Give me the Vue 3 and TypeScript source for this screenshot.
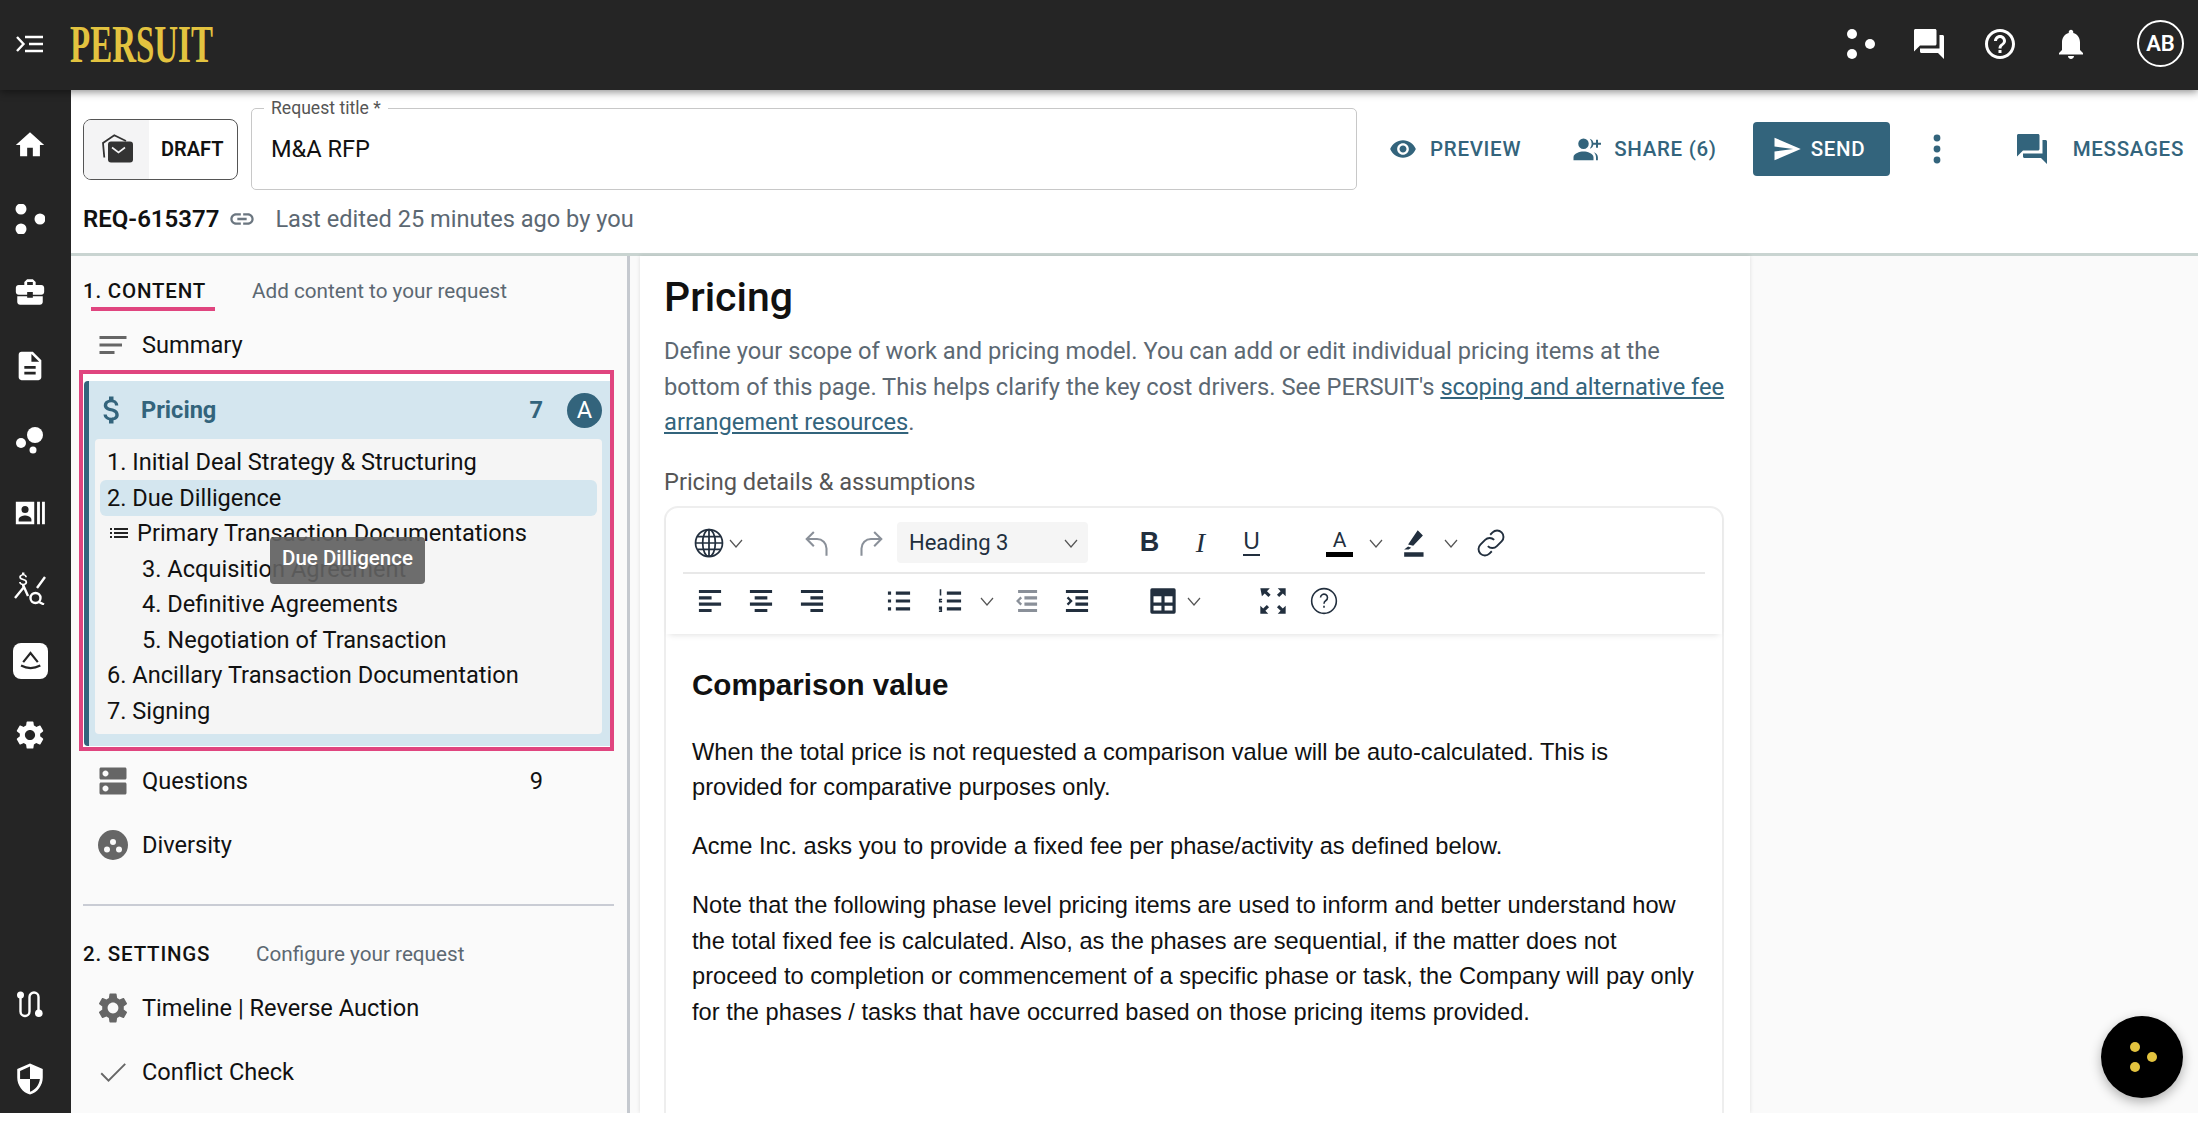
<script setup lang="ts">
const icons: Record<string, string> = {
  home: 'M10 20v-6h4v6h5v-8h3L12 3 2 12h3v8z',
  briefcase: 'M10 16v-1H3.01L3 19c0 1.11.89 2 2 2h14c1.11 0 2-.89 2-2v-4h-7v1h-4zm10-9h-4.01V5l-2-2h-4l-2 2v2H4c-1.1 0-2 .9-2 2v3c0 1.11.89 2 2 2h6v-2h4v2h6c1.1 0 2-.9 2-2V9c0-1.1-.9-2-2-2zm-6 0h-4V5h4v2z',
  doc: 'M14 2H6c-1.1 0-1.99.9-1.99 2L4 20c0 1.1.89 2 1.99 2H18c1.1 0 2-.9 2-2V8l-6-6zm2 16H8v-2h8v2zm0-4H8v-2h8v2zm-3-5V3.5L18.5 9H13z',
  gear: 'M19.14 12.94c.04-.3.06-.61.06-.94 0-.32-.02-.64-.07-.94l2.03-1.58c.18-.14.23-.41.12-.61l-1.92-3.32c-.12-.22-.37-.29-.59-.22l-2.39.96c-.5-.38-1.03-.7-1.62-.94l-.36-2.54c-.04-.24-.24-.41-.48-.41h-3.84c-.24 0-.43.17-.47.41l-.36 2.54c-.59.24-1.13.57-1.62.94l-2.39-.96c-.22-.08-.47 0-.59.22L2.74 8.87c-.12.21-.08.47.12.61l2.03 1.58c-.05.3-.09.63-.09.94s.02.64.07.94l-2.03 1.58c-.18.14-.23.41-.12.61l1.92 3.32c.12.22.37.29.59.22l2.39-.96c.5.38 1.03.7 1.62.94l.36 2.54c.05.24.24.41.48.41h3.84c.24 0 .44-.17.47-.41l.36-2.54c.59-.24 1.13-.56 1.62-.94l2.39.96c.22.08.47 0 .59-.22l1.92-3.32c.12-.22.07-.47-.12-.61l-2.01-1.58zM12 15.6c-1.98 0-3.6-1.62-3.6-3.6s1.62-3.6 3.6-3.6 3.6 1.62 3.6 3.6-1.62 3.6-3.6 3.6z',
  shield: 'M12 1L3 5v6c0 5.55 3.84 10.74 9 12 5.16-1.26 9-6.45 9-12V5l-9-4zm0 10.99h7c-.53 4.12-3.28 7.79-7 8.94V12H5V6.3l7-3.11v8.8z',
  forum: 'M21 6h-2v9H6v2c0 .55.45 1 1 1h11l4 4V7c0-.55-.45-1-1-1zm-4 6V3c0-.55-.45-1-1-1H3c-.55 0-1 .45-1 1v14l4-4h10c.55 0 1-.45 1-1z',
  help: 'M11 18h2v-2h-2v2zm1-16C6.48 2 2 6.48 2 12s4.48 10 10 10 10-4.48 10-10S17.52 2 12 2zm0 18c-4.41 0-8-3.59-8-8s3.59-8 8-8 8 3.59 8 8-3.59 8-8 8zm0-14c-2.21 0-4 1.79-4 4h2c0-1.1.9-2 2-2s2 .9 2 2c0 2-3 1.75-3 5h2c0-2.25 3-2.5 3-5 0-2.21-1.79-4-4-4z',
  bell: 'M12 22c1.1 0 2-.9 2-2h-4c0 1.1.89 2 2 2zm6-6v-5c0-3.07-1.64-5.64-4.5-6.32V4c0-.83-.67-1.5-1.5-1.5s-1.5.67-1.5 1.5v.68C7.63 5.36 6 7.92 6 11v5l-2 2v1h16v-1l-2-2z',
  eye: 'M12 4.5C7 4.5 2.73 7.61 1 12c1.73 4.39 6 7.5 11 7.5s9.27-3.11 11-7.5c-1.73-4.39-6-7.5-11-7.5zM12 17c-2.76 0-5-2.24-5-5s2.24-5 5-5 5 2.24 5 5-2.24 5-5 5zm0-8c-1.66 0-3 1.34-3 3s1.34 3 3 3 3-1.34 3-3-1.34-3-3-3z',
  share: 'M10 12a4.2 4.2 0 1 0 0-8.4 4.2 4.2 0 0 0 0 8.4zm0 2c-3 0-8 1.5-8 4.5V21h16v-2.5c0-3-5-4.5-8-4.5zM15 3.8a4.2 4.2 0 0 1 0 8 6 6 0 0 0 0-8zM18 14.3c2 .8 3.5 2.200 3.500 4.200V21H20v-2.500c0-1.700-.8-3.200-2-4.200zM20 7V4.500h1.600V7H24v1.600h-2.400V11H20V8.600h-2.400V7z',
  send: 'M2.01 21L23 12 2.01 3 2 10l15 2-15 2z',
  dollar: 'M11.8 10.9c-2.27-.59-3-1.2-3-2.15 0-1.09 1.01-1.85 2.7-1.85 1.78 0 2.44.85 2.5 2.1h2.21c-.07-1.72-1.12-3.3-3.21-3.81V3h-3v2.16c-1.94.42-3.5 1.68-3.5 3.61 0 2.31 1.91 3.46 4.7 4.13 2.5.6 3 1.48 3 2.41 0 .69-.49 1.79-2.7 1.79-2.06 0-2.87-.92-2.98-2.1h-2.2c.12 2.19 1.76 3.42 3.68 3.83V21h3v-2.15c1.95-.37 3.5-1.5 3.5-3.55 0-2.84-2.43-3.81-4.7-4.4z',
  dns: 'M20 13H4c-.55 0-1 .45-1 1v6c0 .55.45 1 1 1h16c.55 0 1-.45 1-1v-6c0-.55-.45-1-1-1zM7 19c-1.1 0-2-.9-2-2s.9-2 2-2 2 .9 2 2-.9 2-2 2zM20 3H4c-.55 0-1 .45-1 1v6c0 .55.45 1 1 1h16c.55 0 1-.45 1-1V4c0-.55-.45-1-1-1zM7 9c-1.1 0-2-.9-2-2s.9-2 2-2 2 .9 2 2-.9 2-2 2z',
  diversity: 'M12 2a10 10 0 1 0 0 20 10 10 0 0 0 0-20zM8 17a2 2 0 1 1 0-4 2 2 0 0 1 0 4zm2-7a2 2 0 1 1 4 0 2 2 0 0 1-4 0zm6 7a2 2 0 1 1 0-4 2 2 0 0 1 0 4z',
  check: 'M9 16.8L4.6 12.4l-.9.9L9 18.600 20.600 7l-.9-.9z',
  notes: 'M3 18h10v-2H3v2zM3 6v2h18V6H3zm0 7h15v-2H3v2z',
  list: 'M3 13h2v-2H3v2zm0 4h2v-2H3v2zm0-8h2V7H3v2zm4 4h14v-2H7v2zm0 4h14v-2H7v2zM7 7v2h14V7H7z',
  link: 'M3.9 12c0-1.71 1.39-3.1 3.1-3.1h4V7H7c-2.76 0-5 2.24-5 5s2.24 5 5 5h4v-1.9H7c-1.71 0-3.1-1.39-3.1-3.1zM8 13h8v-2H8v2zm9-6h-4v1.9h4c1.71 0 3.1 1.39 3.1 3.1s-1.39 3.1-3.1 3.1h-4V17h4c2.76 0 5-2.24 5-5s-2.24-5-5-5z',
  contact: 'M2 4h13v16H2zM8.500 7a2.500 2.500 0 1 0 0 5 2.500 2.500 0 0 0 0-5zM4 18h9v-1.500c0-1.800-3-2.800-4.500-2.800S4 14.700 4 16.500zM17 4h2v16h-2zM20.500 4h2v16h-2z',
  alignLeft: 'M5 5h14v2H5zM5 9h8v2H5zM5 13h14v2H5zM5 17h8v2H5z',
  alignCenter: 'M5 5h14v2H5zM8 9h8v2H8zM5 13h14v2H5zM8 17h8v2H8z',
  alignRight: 'M5 5h14v2H5zM11 9h8v2h-8zM5 13h14v2H5zM11 17h8v2h-8z',
  bullets: 'M10 6h9v2h-9zM10 11h9v2h-9zM10 16h9v2h-9zM5 6h2v2H5zM5 11h2v2H5zM5 16h2v2H5z',
  numbers: 'M10 6h9v2h-9zM10 11h9v2h-9zM10 16h9v2h-9zM5.500 4.500h1v4h-1zM5 10.500h2v1H6v.5h1v1H5zM5 15.500h2v3.500H5v-1h1v-.4H5v-1h1v-.1H5z',
  outdent: 'M7 5h12v2H7zM11 9h8v2h-8zM11 13h8v2h-8zM7 17h12v2H7zM8.500 9.200l1 1L7.700 12l1.800 1.800-1 1L5.700 12z',
  indent: 'M5 5h14v2H5zM11 9h8v2h-8zM11 13h8v2h-8zM5 17h14v2H5zM6.500 9.200l-1 1L7.300 12l-1.800 1.800 1 1L9.300 12z',
  table: 'M5 4h14a1 1 0 0 1 1 1v14a1 1 0 0 1-1 1H5a1 1 0 0 1-1-1V5a1 1 0 0 1 1-1zm1 5v4h5V9zm7 0v4h5V9zm-7 6v3h5v-3zm7 0v3h5v-3z',
  fullscreen: 'M4 4h6L8.200 5.800l2.300 2.300-1.400 1.400-2.300-2.300L5 9zM20 4v5l-1.800-1.800-2.300 2.300-1.400-1.400 2.300-2.300L15 4zM4 20v-5l1.800 1.800 2.300-2.300 1.400 1.400-2.300 2.300L9 20zM20 20h-5l1.800-1.800-2.300-2.300 1.400-1.400 2.300 2.300L20 15z',
}

type NavRow = { label: string; icon: string; count?: number }

const railTop = ['home', 'dots', 'briefcase', 'doc', 'bubbles', 'contact', 'search', 'tile', 'gear']

const contentRows: NavRow[] = [
  { label: 'Questions', icon: 'dns', count: 9 },
  { label: 'Diversity', icon: 'diversity' },
]
const settingsRows: NavRow[] = [
  { label: 'Timeline | Reverse Auction', icon: 'gear' },
  { label: 'Conflict Check', icon: 'check' },
]

type PricingItem = { label: string; nested?: boolean; active?: boolean; group?: boolean }
const pricingItems: PricingItem[] = [
  { label: '1. Initial Deal Strategy & Structuring' },
  { label: '2. Due Dilligence', active: true },
  { label: 'Primary Transaction Documentations', group: true },
  { label: '3. Acquisition Agreement', nested: true },
  { label: '4. Definitive Agreements', nested: true },
  { label: '5. Negotiation of Transaction', nested: true },
  { label: '6. Ancillary Transaction Documentation' },
  { label: '7. Signing' },
]
</script>

<template>
  <div class="page">
    <header class="topbar">
      <svg class="menu-icon" viewBox="0 0 28 20" fill="none" stroke="#fff" stroke-width="2.400">
        <path d="M9 3h18M13 10h14M9 17h18M1 3l6.500 7L1 17" />
      </svg>
      <span class="logo">PERSUIT</span>
      <div class="top-actions">
        <svg class="ti-dots" viewBox="0 0 30 30" fill="#fff">
          <circle cx="6" cy="5" r="5" /><circle cx="6" cy="25" r="5" /><circle cx="24" cy="15" r="5" />
        </svg>
        <svg class="ti" viewBox="0 0 24 24" fill="#fff"><path :d="icons.forum" /></svg>
        <svg class="ti" viewBox="0 0 24 24" fill="#fff"><path :d="icons.help" /></svg>
        <svg class="ti" viewBox="0 0 24 24" fill="#fff"><path :d="icons.bell" /></svg>
        <div class="avatar">AB</div>
      </div>
    </header>

    <div class="shell">
      <nav class="rail">
        <div class="rail-group">
          <div v-for="name in railTop" :key="name" class="rail-slot">
            <svg v-if="icons[name]" class="rail-icon" viewBox="0 0 24 24" fill="#fff"><path :d="icons[name]" /></svg>
            <svg v-else-if="name === 'dots'" class="rail-small" viewBox="0 0 30 30" fill="#fff">
              <circle cx="6" cy="5" r="5.500" /><circle cx="6" cy="25" r="5.500" /><circle cx="25" cy="15" r="5.500" />
            </svg>
            <svg v-else-if="name === 'bubbles'" class="rail-small" viewBox="0 0 30 30" fill="#fff">
              <circle cx="20" cy="10" r="8" /><circle cx="6" cy="18" r="5" /><circle cx="18" cy="25" r="3.500" />
            </svg>
            <svg v-else-if="name === 'search'" class="rail-search" viewBox="0 0 34 36" fill="none" stroke="#fff" stroke-width="2.400">
              <path :d="icons.dollar" fill="#fff" stroke="none" transform="translate(1 1) scale(.8)" />
              <path d="M32 8l-8 11M2 29l9-11 4 9" />
              <circle cx="22.500" cy="29" r="5" /><path d="M26 33l5 2.500" />
            </svg>
            <div v-else-if="name === 'tile'" class="tile">
              <svg viewBox="0 0 24 24" fill="none" stroke="#252525" stroke-width="1.900">
                <path d="M5.500 13.500L12 5.300l6.500 8.200M3.600 16.500Q12 21 20.700 16.500" />
              </svg>
            </div>
          </div>
        </div>
        <div class="rail-group rail-bottom">
          <div class="rail-slot">
            <svg class="rail-small" viewBox="0 0 30 30" fill="none" stroke="#fff" stroke-width="2.400">
              <path d="M5.500 5V21.500a4.500 4.500 0 0 0 9 0V7a4.500 4.500 0 0 1 9 0V23" />
              <circle cx="5.500" cy="5" r="3.500" fill="#fff" stroke="none" /><circle cx="23.800" cy="23.300" r="3.800" fill="#fff" stroke="none" />
            </svg>
          </div>
          <div class="rail-slot">
            <svg class="rail-icon" viewBox="0 0 24 24" fill="#fff"><path :d="icons.shield" /></svg>
          </div>
        </div>
      </nav>

      <main class="main">
        <section class="request-head">
          <div class="head-row">
            <div class="draft">
              <div class="draft-icon">
                <svg viewBox="0 0 32 32">
                  <path d="M3.300 24.500L2 10l11.300-7.800L25 8" fill="none" stroke="#333" stroke-width="1.800" />
                  <rect x="7" y="8.500" width="25" height="21" rx="3" fill="#333" />
                  <path d="M11 14.500l6.500 5 6.500-5" fill="none" stroke="#f4f4f5" stroke-width="1.600" />
                </svg>
              </div>
              <span class="draft-label">DRAFT</span>
            </div>
            <div class="title-field">
              <span class="title-label">Request title *</span>
              <span class="title-value">M&amp;A RFP</span>
            </div>
            <div class="action action-preview">
              <svg viewBox="0 0 24 24"><path :d="icons.eye" /></svg>
              <span>PREVIEW</span>
            </div>
            <div class="action action-share">
              <svg viewBox="0 0 24 24"><path :d="icons.share" /></svg>
              <span>SHARE (6)</span>
            </div>
            <button class="send">
              <svg viewBox="0 0 24 24"><path :d="icons.send" /></svg>
              <span>SEND</span>
            </button>
            <svg class="more" viewBox="0 0 8 32"><circle cx="4" cy="5" r="3.400" /><circle cx="4" cy="16" r="3.400" /><circle cx="4" cy="27" r="3.400" /></svg>
            <div class="action action-messages">
              <svg viewBox="0 0 24 24"><path :d="icons.forum" /></svg>
              <span>MESSAGES</span>
            </div>
          </div>
          <div class="meta-row">
            <span class="req-id">REQ-615377</span>
            <svg class="req-link" viewBox="0 0 24 24"><path :d="icons.link" /></svg>
            <span class="edited">Last edited 25 minutes ago by you</span>
          </div>
        </section>

        <div class="workspace">
          <aside class="steps">
            <div class="step-head step-content">
              <span class="step-title">1. CONTENT</span>
              <span class="step-sub">Add content to your request</span>
            </div>
            <div class="row row-summary">
              <span class="row-icon"><svg viewBox="0 0 24 24"><path :d="icons.notes" /></svg></span>
              <span>Summary</span>
            </div>

            <div class="highlight">
              <div class="pricing">
                <div class="pricing-head">
                  <span class="row-icon"><svg viewBox="0 0 24 24"><path :d="icons.dollar" /></svg></span>
                  <span class="pricing-name">Pricing</span>
                  <span class="pricing-count">7</span>
                  <span class="pricing-badge">A</span>
                </div>
                <ul class="pricing-items">
                  <li
                    v-for="item in pricingItems"
                    :key="item.label"
                    :class="{ nested: item.nested, active: item.active, group: item.group }"
                  >
                    <svg v-if="item.group" viewBox="0 0 24 24"><path :d="icons.list" /></svg>
                    {{ item.label }}
                  </li>
                  <div class="tooltip">Due Dilligence</div>
                </ul>
              </div>
            </div>

            <div class="content-rows">
              <div v-for="row in contentRows" :key="row.label" class="row">
                <span class="row-icon"><svg viewBox="0 0 24 24"><path :d="icons[row.icon]" /></svg></span>
                <span>{{ row.label }}</span>
                <span v-if="row.count" class="row-count">{{ row.count }}</span>
              </div>
            </div>

            <div class="divider"></div>

            <div class="step-head step-settings">
              <span class="step-title">2. SETTINGS</span>
              <span class="step-sub">Configure your request</span>
            </div>
            <div v-for="row in settingsRows" :key="row.label" class="row">
              <span class="row-icon"><svg viewBox="0 0 24 24"><path :d="icons[row.icon]" /></svg></span>
              <span>{{ row.label }}</span>
            </div>
          </aside>

          <article class="card">
            <h1 class="card-title">Pricing</h1>
            <p class="card-desc">
              Define your scope of work and pricing model. You can add or edit individual pricing items at the
              bottom of this page. This helps clarify the key cost drivers. See PERSUIT's
              <a class="card-link">scoping and alternative fee arrangement resources</a>.
            </p>
            <div class="field-label">Pricing details &amp; assumptions</div>

            <div class="editor">
              <div class="toolbar">
                <div class="tb-row tb-first">
                  <span class="tb-btn">
                    <svg viewBox="0 0 24 24" fill="none" stroke="#222f3e" stroke-width="1.100">
                      <circle cx="12" cy="12" r="8.500" /><ellipse cx="12" cy="12" rx="4" ry="8.500" />
                      <path d="M12 3.500v17M3.500 12h17M4.700 8h14.600M4.700 16h14.600" />
                    </svg>
                  </span>
                  <svg class="tb-chev tb-chev-globe" viewBox="0 0 14 14"><path d="M1 4l6 7 6-7" /></svg>
                  <span class="tb-btn tb-undo">
                    <svg viewBox="0 0 24 24" fill="none" stroke="#8a9099" stroke-width="1.300"><path d="M10 5L5.500 9.500 10 14M6 9.500h6a6 6 0 0 1 6 6V20" /></svg>
                  </span>
                  <span class="tb-btn tb-redo">
                    <svg viewBox="0 0 24 24" fill="none" stroke="#8a9099" stroke-width="1.300"><path d="M14 5l4.500 4.500L14 14M18 9.500h-6a6 6 0 0 0-6 6V20" /></svg>
                  </span>
                  <div class="tb-select">
                    <span>Heading 3</span>
                    <svg class="tb-chev" viewBox="0 0 14 14"><path d="M1 4l6 7 6-7" /></svg>
                  </div>
                  <span class="tb-btn tb-bold"><span class="tb-b">B</span></span>
                  <span class="tb-btn"><span class="tb-i">I</span></span>
                  <span class="tb-btn"><span class="tb-u">U</span></span>
                  <span class="tb-btn tb-color">
                    <span class="tb-a">A</span>
                  </span>
                  <svg class="tb-chev tb-chev-mid" viewBox="0 0 14 14"><path d="M1 4l6 7 6-7" /></svg>
                  <span class="tb-btn tb-mark">
                    <svg viewBox="0 0 24 24" fill="#222f3e">
                      <path d="M14.500 2.500l4 4-7.500 8-4-1zM7 15l2.500 1-2 1.500H4zM4 19.500h15V23H4z" />
                    </svg>
                  </span>
                  <svg class="tb-chev tb-chev-mid" viewBox="0 0 14 14"><path d="M1 4l6 7 6-7" /></svg>
                  <span class="tb-btn tb-link">
                    <svg viewBox="0 0 24 24" fill="none" stroke="#222f3e" stroke-width="1.200">
                      <path d="M10 14a4 4 0 0 0 5.700 0l3-3a4 4 0 0 0-5.700-5.700l-1.500 1.500M14 10a4 4 0 0 0-5.700 0l-3 3a4 4 0 0 0 5.700 5.700l1.500-1.500" />
                    </svg>
                  </span>
                </div>
                <div class="tb-row tb-second">
                  <span class="tb-btn"><svg viewBox="0 0 24 24" fill="#222f3e"><path :d="icons.alignLeft" /></svg></span>
                  <span class="tb-btn"><svg viewBox="0 0 24 24" fill="#222f3e"><path :d="icons.alignCenter" /></svg></span>
                  <span class="tb-btn"><svg viewBox="0 0 24 24" fill="#222f3e"><path :d="icons.alignRight" /></svg></span>
                  <span class="tb-btn tb-bullets"><svg viewBox="0 0 24 24" fill="#222f3e"><path :d="icons.bullets" /></svg></span>
                  <span class="tb-btn"><svg viewBox="0 0 24 24" fill="#222f3e"><path :d="icons.numbers" /></svg></span>
                  <svg class="tb-chev tb-chev-mid" viewBox="0 0 14 14"><path d="M1 4l6 7 6-7" /></svg>
                  <span class="tb-btn tb-outdent"><svg viewBox="0 0 24 24" fill="#8a9099"><path :d="icons.outdent" /></svg></span>
                  <span class="tb-btn"><svg viewBox="0 0 24 24" fill="#222f3e"><path :d="icons.indent" /></svg></span>
                  <span class="tb-btn tb-table"><svg viewBox="0 0 24 24" fill="#222f3e" fill-rule="evenodd"><path :d="icons.table" /></svg></span>
                  <svg class="tb-chev tb-chev-table" viewBox="0 0 14 14"><path d="M1 4l6 7 6-7" /></svg>
                  <span class="tb-btn tb-full"><svg viewBox="0 0 24 24" fill="#222f3e"><path :d="icons.fullscreen" /></svg></span>
                  <span class="tb-btn">
                    <svg viewBox="0 0 24 24" fill="none" stroke="#222f3e" stroke-width="1">
                      <circle cx="12" cy="12" r="7.800" />
                      <path d="M9.800 9.800a2.200 2.200 0 1 1 3.400 1.900c-.8.500-1.200 1-1.200 2" />
                      <path d="M12 15v1.200" />
                    </svg>
                  </span>
                </div>
              </div>
              <div class="editor-body">
                <h3>Comparison value</h3>
                <p>When the total price is not requested a comparison value will be auto-calculated. This is provided for comparative purposes only.</p>
                <p>Acme Inc. asks you to provide a fixed fee per phase/activity as defined below.</p>
                <p>Note that the following phase level pricing items are used to inform and better understand how the total fixed fee is calculated. Also, as the phases are sequential, if the matter does not proceed to completion or commencement of a specific phase or task, the Company will pay only for the phases / tasks that have occurred based on those pricing items provided.</p>
              </div>
            </div>
          </article>
        </div>
      </main>
    </div>

    <div class="fab">
      <svg viewBox="0 0 30 30" fill="#e3c33f">
        <circle cx="8" cy="5" r="5" /><circle cx="8" cy="25" r="5" /><circle cx="25" cy="15" r="5" />
      </svg>
    </div>
  </div>
</template>

<style>
html,
body {
  margin: 0;
  background: #fff;
}
</style>

<style scoped>
.page {
  position: relative;
  display: flex;
  flex-direction: column;
  height: 1113px;
  overflow: hidden;
  font-family: Roboto, "Liberation Sans", sans-serif;
  color: #111;
  background: #fafafa;
}

/* top bar */
.topbar {
  position: relative;
  z-index: 2;
  display: flex;
  align-items: center;
  flex: 0 0 90px;
  padding: 0 14px 3px 16px;
  box-sizing: border-box;
  background: #252525;
  box-shadow: 0 2px 8px rgba(0, 0, 0, 0.45);
}

.menu-icon {
  width: 28px;
  height: 20px;
}

.logo {
  margin-left: 26px;
  width: 144px;
  font-family: "Liberation Serif", serif;
  font-size: 53px;
  font-weight: 700;
  line-height: 50px;
  color: #e3c33f;
  transform: scaleX(0.622);
  transform-origin: left center;
}

.top-actions {
  display: flex;
  align-items: center;
  margin-left: auto;
}

.ti-dots {
  width: 30px;
  height: 30px;
  margin-right: 35px;
}

.ti {
  width: 36px;
  height: 36px;
  margin-right: 35px;
}

.avatar {
  display: flex;
  align-items: center;
  justify-content: center;
  width: 47px;
  height: 47px;
  box-sizing: border-box;
  margin-left: 13px;
  border: 2px solid #fff;
  border-radius: 50%;
  color: #fff;
  font-size: 22px;
  font-weight: 600;
}

.shell {
  display: flex;
  flex: 1;
  min-height: 0;
}

/* left rail */
.rail {
  display: flex;
  flex-direction: column;
  justify-content: space-between;
  flex: 0 0 71px;
  padding: 38px 0 17px;
  box-sizing: border-box;
  background: #252525;
}

.rail-group {
  display: flex;
  flex-direction: column;
  gap: 39.7px;
}

.rail-slot {
  display: flex;
  align-items: center;
  justify-content: center;
  height: 34px;
  padding-right: 11px;
}

.rail-icon {
  width: 34px;
  height: 34px;
  flex: none;
}

.rail-small {
  width: 30px;
  height: 30px;
  flex: none;
}

.rail-search {
  width: 34px;
  height: 36px;
  flex: none;
}

.tile {
  display: flex;
  align-items: center;
  justify-content: center;
  width: 35px;
  height: 36px;
  flex: none;
  border-radius: 8px;
  background: #fff;
}

.tile svg {
  width: 27px;
  height: 27px;
}

.main {
  display: flex;
  flex-direction: column;
  flex: 1;
  min-width: 0;
}

/* request header */
.request-head {
  flex: 0 0 166px;
  box-sizing: border-box;
  padding: 18px 0 0 12px;
  background: #fff;
  border-bottom: 3px solid #c9d4d1;
}

.head-row {
  display: flex;
  align-items: center;
  height: 82px;
}

.draft {
  display: flex;
  align-items: center;
  width: 155px;
  height: 61px;
  flex: none;
  box-sizing: border-box;
  overflow: hidden;
  border: 1px solid #555;
  border-radius: 8px;
}

.draft-icon {
  display: flex;
  align-items: center;
  justify-content: center;
  width: 65px;
  height: 100%;
  background: #f4f4f5;
}

.draft-icon svg {
  width: 32px;
  height: 32px;
}

.draft-label {
  margin-left: 12px;
  font-size: 20px;
  font-weight: 600;
}

.title-field {
  position: relative;
  display: flex;
  align-items: center;
  width: 1106px;
  height: 82px;
  flex: none;
  box-sizing: border-box;
  margin-left: 13px;
  padding-left: 19px;
  border: 1px solid #c8c8c8;
  border-radius: 5px;
}

.title-label {
  position: absolute;
  top: -10px;
  left: 12px;
  padding: 0 7px;
  background: #fff;
  color: #555;
  font-size: 17.6px;
  line-height: 18px;
}

.title-value {
  font-size: 23.6px;
}

.action {
  display: flex;
  align-items: center;
  flex: none;
  color: #33647c;
  font-size: 20.5px;
  font-weight: 500;
  letter-spacing: 0.7px;
}

.action svg {
  fill: #33647c;
  flex: none;
}

.action-preview {
  margin-left: 32px;
}

.action-preview svg {
  width: 28px;
  height: 28px;
  margin-right: 13px;
}

.action-share {
  margin-left: 50px;
}

.action-share svg {
  width: 30px;
  height: 30px;
  margin-right: 13px;
}

.send {
  display: flex;
  align-items: center;
  width: 137px;
  height: 54px;
  flex: none;
  margin-left: 36px;
  padding: 0 0 0 19px;
  border: none;
  border-radius: 4px;
  background: #33647c;
  color: #fff;
  font-family: inherit;
  font-size: 20.5px;
  font-weight: 500;
  letter-spacing: 0.7px;
}

.send svg {
  width: 30px;
  height: 30px;
  margin-right: 9px;
  fill: #fff;
}

.more {
  width: 8px;
  height: 32px;
  flex: none;
  margin-left: 43px;
  fill: #33647c;
}

.action-messages {
  margin-left: 73px;
}

.action-messages svg {
  width: 36px;
  height: 36px;
  margin-right: 23px;
}

.meta-row {
  display: flex;
  align-items: center;
  height: 30px;
  margin-top: 14px;
}

.req-id {
  font-size: 24px;
  font-weight: 600;
}

.req-link {
  width: 28px;
  height: 28px;
  margin-left: 9px;
  fill: #6b7680;
}

.edited {
  margin-left: 19px;
  font-size: 23.6px;
  color: #5c6872;
}

/* workspace */
.workspace {
  display: flex;
  flex: 1;
  min-height: 0;
}

.steps {
  flex: 0 0 559px;
  box-sizing: border-box;
  padding: 23px 13px 0 12px;
  background: #fafafa;
  border-right: 3px solid #c5c9cf;
  font-size: 23.6px;
}

.step-head {
  position: relative;
  display: flex;
  align-items: center;
  height: 24px;
}

.step-title {
  font-size: 20.5px;
  font-weight: 500;
  letter-spacing: 0.8px;
}

.step-sub {
  position: absolute;
  font-size: 20.7px;
  color: #5c6872;
}

.step-content .step-sub {
  left: 169px;
}

.step-settings .step-sub {
  left: 173px;
}

.step-settings {
  margin-bottom: 10px;
}

.step-content::after {
  content: "";
  position: absolute;
  left: 8px;
  top: 28px;
  width: 124px;
  height: 4px;
  background: #e0457f;
}

.row {
  display: flex;
  align-items: center;
  height: 64px;
}

.row-summary {
  height: 50px;
  margin-top: 17px;
}

.row-icon {
  display: flex;
  align-items: center;
  justify-content: center;
  width: 36px;
  height: 36px;
  flex: none;
  margin: 0 11px 0 12px;
}

.row-icon svg {
  width: 36px;
  height: 36px;
  fill: #666;
}

.row-count {
  margin-left: auto;
  margin-right: 71px;
}

.highlight {
  box-sizing: border-box;
  width: 535px;
  height: 381px;
  margin-left: -4px;
  padding: 7px 0 1px 1px;
  border: 4px solid #e0457f;
  background: #fff;
}

.pricing {
  box-sizing: border-box;
  height: 100%;
  border-left: 5px solid #33647c;
  border-radius: 4px 0 0 4px;
  background: #d4e6ef;
}

.pricing-head {
  display: flex;
  align-items: center;
  height: 58px;
  color: #33647c;
}

.pricing-head .row-icon {
  margin: 0 11px 0 5px;
}

.pricing-head .row-icon svg {
  fill: #33647c;
}

.pricing-name {
  font-weight: 700;
}

.pricing-count {
  margin-left: auto;
  font-weight: 700;
}

.pricing-badge {
  display: flex;
  align-items: center;
  justify-content: center;
  width: 35px;
  height: 35px;
  margin: 0 8px 0 24px;
  border-radius: 50%;
  background: #33647c;
  color: #fff;
}

.pricing-items {
  position: relative;
  margin: 0 8px 0 6px;
  padding: 5.5px 5px;
  list-style: none;
  border-radius: 4px;
  background: #f5f5f5;
}

.pricing-items li {
  display: flex;
  align-items: center;
  height: 35.5px;
  padding-left: 7px;
  border-radius: 6px;
}

.pricing-items li.nested {
  padding-left: 42px;
}

.pricing-items li.active {
  background: #d4e6ef;
}

.pricing-items li.group svg {
  width: 24px;
  height: 24px;
  margin-right: 6px;
  fill: #222;
}

.tooltip {
  position: absolute;
  top: 98px;
  left: 175px;
  display: flex;
  align-items: center;
  justify-content: center;
  width: 155px;
  height: 47px;
  padding-bottom: 6px;
  box-sizing: border-box;
  border-radius: 4px;
  background: rgba(97, 97, 97, 0.92);
  color: #fff;
  font-size: 20.5px;
  font-weight: 500;
}

.content-rows {
  margin-top: -2px;
}

.divider {
  height: 2px;
  margin: 27px 0 36px;
  background: #c9ccd4;
}

/* main card */
.card {
  flex: 0 0 1110px;
  box-sizing: border-box;
  margin-left: 10px;
  padding: 17px 26px 0 24px;
  overflow: hidden;
  background: #fff;
  box-shadow: 0 0 4px rgba(0, 0, 0, 0.12);
}

.card-title {
  margin: 0;
  font-size: 41px;
  font-weight: 500;
  line-height: 48px;
}

.card-desc {
  margin: 13px -8px 0 0;
  font-size: 23.68px;
  line-height: 35.5px;
  color: #5c6872;
}

.card-link {
  color: #33647c;
  text-decoration: underline;
}

.field-label {
  margin-top: 26px;
  font-size: 23.6px;
  line-height: 30px;
  color: #555;
}

.editor {
  margin-top: 9px;
  height: 700px;
  border: 2px solid #eee;
  border-radius: 14px 14px 0 0;
}

.toolbar {
  padding: 6px 17px 6px;
  box-shadow: 0 4px 6px -3px rgba(0, 0, 0, 0.12);
}

.tb-row {
  display: flex;
  align-items: center;
}

.tb-first {
  height: 58px;
  border-bottom: 2px solid #e8e8e8;
}

.tb-second {
  height: 54px;
  padding-left: 1.5px;
}

.tb-btn {
  display: flex;
  align-items: center;
  justify-content: center;
  width: 51px;
  height: 40px;
  flex: none;
  color: #222f3e;
}

.tb-btn svg {
  width: 38px;
  height: 38px;
  flex: none;
}

.tb-chev {
  width: 14px;
  height: 14px;
  flex: none;
  fill: none;
  stroke: #555;
  stroke-width: 1.200;
}

.tb-chev-globe {
  margin-left: -5px;
}

.tb-chev-mid {
  margin: 0 4px;
}

.tb-chev-table {
  margin-left: -2px;
}

.tb-undo {
  margin-left: 48px;
}

.tb-redo {
  margin-left: 3px;
}

.tb-select {
  display: flex;
  align-items: center;
  justify-content: space-between;
  width: 191px;
  height: 41px;
  flex: none;
  box-sizing: border-box;
  margin-left: 1px;
  padding: 0 10px 0 12px;
  border-radius: 4px;
  background: #f5f5f5;
  font-size: 22px;
  color: #222f3e;
}

.tb-bold {
  margin-left: 36px;
}

.tb-b {
  font-family: "Liberation Sans", sans-serif;
  font-size: 27px;
  font-weight: 700;
}

.tb-i {
  font-family: "Liberation Serif", serif;
  font-size: 28px;
  font-style: italic;
}

.tb-u {
  font-family: "Liberation Sans", sans-serif;
  font-size: 23px;
  line-height: 25px;
  border-bottom: 2px solid #222f3e;
}

.tb-color {
  margin-left: 37px;
}

.tb-a {
  width: 27px;
  border-bottom: 5px solid #000;
  text-align: center;
  font-size: 21px;
  line-height: 24px;
}

.tb-btn.tb-mark svg {
  width: 31px;
  height: 31px;
}

.tb-mark {
  margin-left: 2px;
}

.tb-link {
  margin-left: 3px;
}

.tb-bullets {
  margin-left: 36px;
}

.tb-outdent {
  margin-left: 3px;
}

.tb-table {
  margin-left: 35px;
}

.tb-full {
  margin-left: 47px;
}

.editor-body {
  padding: 31px 20px 0 26px;
  font-family: "Liberation Sans", Arial, sans-serif;
  font-size: 23.64px;
  line-height: 35.5px;
  color: #111;
}

.editor-body h3 {
  margin: 0 0 30px;
  font-size: 29.6px;
  line-height: 40px;
}

.editor-body p {
  margin: 0 0 23.5px;
}

.fab {
  position: absolute;
  right: 15px;
  bottom: 15px;
  display: flex;
  align-items: center;
  justify-content: center;
  width: 82px;
  height: 82px;
  border-radius: 50%;
  background: #000;
  box-shadow: 0 4px 12px rgba(0, 0, 0, 0.3);
}

.fab svg {
  width: 30px;
  height: 30px;
}
</style>
